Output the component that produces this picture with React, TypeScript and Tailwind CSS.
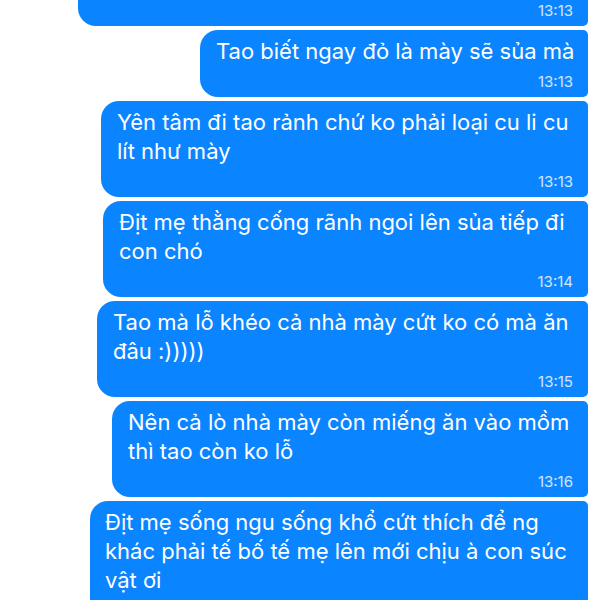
const messages = [
  {
    width: 'w-[388px]',
    lines: ['Tao biết ngay đỏ là mày sẽ sủa mà'],
    time: '13:13',
  },
  {
    width: 'w-[487px]',
    lines: ['Yên tâm đi tao rảnh chứ ko phải loại cu li cu', 'lít như mày'],
    time: '13:13',
  },
  {
    width: 'w-[485px]',
    lines: ['Địt mẹ thằng cống rãnh ngoi lên sủa tiếp đi', 'con chó'],
    time: '13:14',
  },
  {
    width: 'w-[491px]',
    lines: ['Tao mà lỗ khéo cả nhà mày cứt ko có mà ăn', 'đâu :)))))'],
    time: '13:15',
  },
  {
    width: 'w-[476px]',
    lines: ['Nên cả lò nhà mày còn miếng ăn vào mồm', 'thì tao còn ko lỗ'],
    time: '13:16',
  },
]

export default function App() {
  return (
    <div
      className="h-[600px] w-[600px] overflow-hidden bg-white"
      style={{ fontFamily: 'Inter, "Noto Sans", sans-serif' }}
    >
      <div className="flex flex-col items-end gap-[4px] pr-[12px]">
        {/* bubble cut off at the top */}
        <div className="flex h-[26px] w-[510px] items-end justify-end rounded-bl-[18px] rounded-br-[5px] bg-[#0b84ff] pb-[6px] pr-[15px]">
          <span className="text-[15px] leading-[18px] text-white/80">13:13</span>
        </div>

        {messages.map((m, i) => (
          <div
            key={i}
            className={`${m.width} shrink-0 rounded-l-[18px] rounded-r-[5px] bg-[#0b84ff] pb-[6px] pl-[16px] pr-[15px] pt-[7px]`}
          >
            <div className="text-[22px] leading-[29px] text-white">
              {m.lines.map((l, j) => (
                <div key={j} className="whitespace-nowrap">
                  {l}
                </div>
              ))}
            </div>
            <div className="mt-[7px] text-right text-[15px] leading-[18px] text-white/80">
              {m.time}
            </div>
          </div>
        ))}

        {/* last bubble runs past the bottom edge */}
        <div className="w-[498px] shrink-0 rounded-l-[18px] rounded-r-[5px] bg-[#0b84ff] pb-[40px] pl-[15px] pr-[15px] pt-[7px]">
          <div className="text-[22px] leading-[29px] text-white">
            <div className="whitespace-nowrap">Địt mẹ sống ngu sống khổ cứt thích để ng</div>
            <div className="whitespace-nowrap">khác phải tế bố tế mẹ lên mới chịu à con súc</div>
            <div className="whitespace-nowrap">vật ơi</div>
          </div>
        </div>
      </div>
    </div>
  )
}
